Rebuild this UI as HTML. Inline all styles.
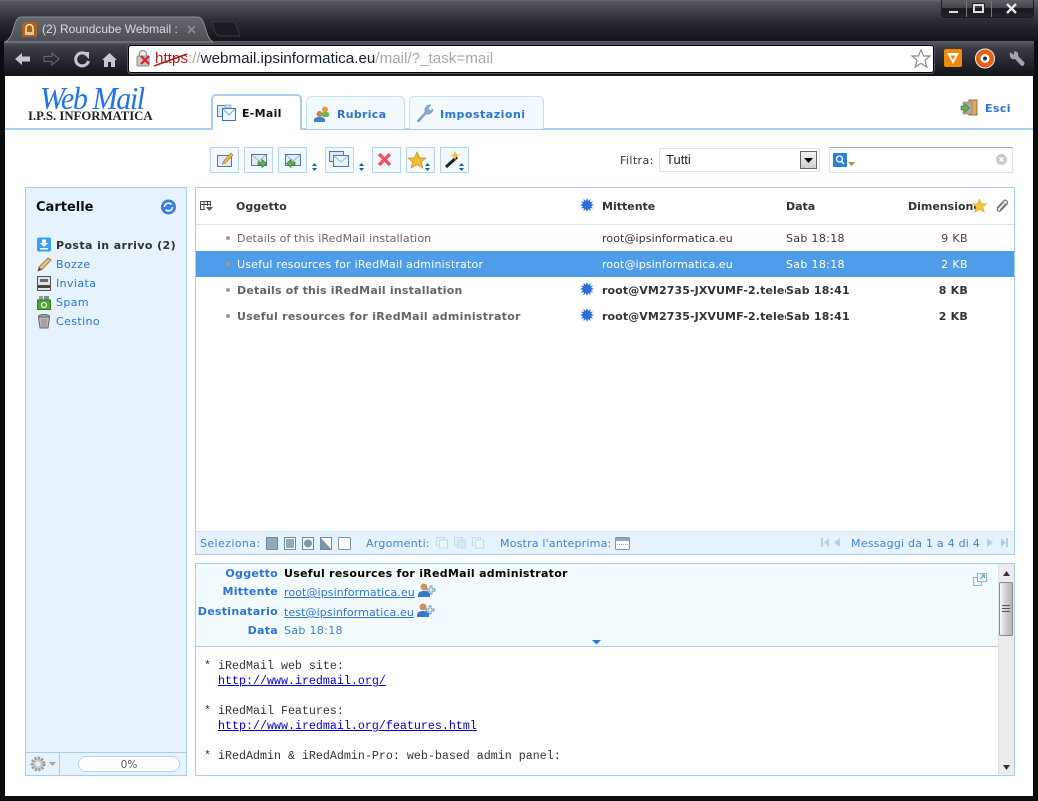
<!DOCTYPE html>
<html><head><meta charset="utf-8"><style>
html,body{margin:0;padding:0;width:1038px;height:801px;overflow:hidden;background:#0b0c10}
*{box-sizing:border-box}
.a,span.t{position:absolute}
svg{position:absolute;overflow:visible}
.t{position:absolute;white-space:nowrap;font:11px/14px "DejaVu Sans","Liberation Sans",sans-serif;color:#333}
.b{font-weight:bold}
.l{color:#2a75d8}
.s1{letter-spacing:.1px}.s2{letter-spacing:.2px}.s3{letter-spacing:.28px}.s4{letter-spacing:.4px}
.btn{position:absolute;top:147px;width:29px;height:26px;background:#f2f9ff;border:1px solid #b5d5f2}
.row{position:absolute;left:196px;width:818px;height:26px}
.dot{position:absolute;left:226px;width:4px;height:4px;border-radius:2px;background:#999}
</style></head><body>
<!-- chrome frame -->
<div class="a" style="left:0;top:0;width:1038px;height:41px;background:linear-gradient(#6a6b70 0,#53555e 2px,#2c2e37 20px,#15171e 38px)"></div>
<div class="a" style="left:4px;top:41px;width:1030px;height:36px;background:linear-gradient(#5a5c65 0,#3c3e47 6px,#15171e 32px)"></div>
<svg style="left:0;top:0" width="250" height="45"><defs><linearGradient id="tg" x1="0" y1="0" x2="0" y2="1"><stop offset="0" stop-color="#66686f"/><stop offset="1" stop-color="#4c4e57"/></linearGradient></defs>
<path d="M5 42C10 40 12 34 14 27C16 20 17 17 22 17H197C202 17 203 21 205 27C207 34 209 40 213 42Z" fill="url(#tg)" stroke="#8b8d94" stroke-width="1"/>
<path d="M212 22H233C236 22 238 30 240 36H219C215 36 214 28 212 22Z" fill="#1a1c23" stroke="#383a42"/></svg>
<svg style="left:22px;top:22px" width="15" height="15"><rect width="15" height="15" rx="2" fill="#a5651c"/><path d="M4 10V6a3.500 3.500 0 0 1 7 0V10" fill="none" stroke="#f4dfbe" stroke-width="1.600"/><rect x="3" y="10" width="9" height="3" fill="#e8c89a"/></svg>
<span class="t" style="left:42px;top:21px;font:12px/16px 'Liberation Sans',sans-serif;color:#d9dbe0;width:136px;overflow:hidden">(2) Roundcube Webmail ::</span>
<svg style="left:188px;top:26px" width="7" height="7"><path d="M0 0L7 7M7 0L0 7" stroke="#8b8d94" stroke-width="1.600"/></svg>
<!-- window buttons -->
<div class="a" style="left:941px;top:0;width:93px;height:18px;background:linear-gradient(#5e5f65 0,#44464d 45%,#17181d 50%,#24252b 100%);border:1px solid #1a1b20;border-top:0;border-radius:0 0 4px 4px"></div>
<div class="a" style="left:966px;top:1px;width:1px;height:16px;background:#777"></div>
<div class="a" style="left:991px;top:1px;width:1px;height:16px;background:#777"></div>
<div class="a" style="left:948px;top:10px;width:11px;height:4px;background:#ddd;border:1px solid #222"></div>
<div class="a" style="left:973px;top:4px;width:11px;height:9px;border:2px solid #ddd;outline:1px solid #222"></div>
<svg style="left:1006px;top:4px" width="11" height="9"><path d="M1 0L10 9M10 0L1 9" stroke="#e6e6e6" stroke-width="2.400"/></svg>
<!-- nav icons -->
<svg style="left:14px;top:51px" width="110" height="18"><path d="M1 8L8 2V5.500H16V10.500H8V14Z" fill="#c6c7ca"/>
<path d="M45 8L38 2V5.500H30V10.500H38V14Z" fill="none" stroke="#60626a" stroke-width="1.200"/>
<path d="M73 4A6.500 6.500 0 1 0 74.500 10" fill="none" stroke="#c6c7ca" stroke-width="3"/><path d="M68 1L75 1V8Z" fill="#c6c7ca"/>
<path d="M88 9L95.500 2L103 9H101V16H97V11H94V16H90V9Z" fill="#c6c7ca"/></svg>
<!-- omnibox -->
<div class="a" style="left:128px;top:45px;width:806px;height:28px;background:#fff;border:1px solid #000;box-shadow:0 0 0 1px #55575e;border-radius:3px"></div>
<svg style="left:136px;top:50px" width="20" height="18"><rect x="1" y="6" width="12" height="10" rx="1" fill="#c9c9c9" stroke="#8a8a8a"/><path d="M3.500 6V4a3.500 3.500 0 0 1 7 0V6" fill="none" stroke="#999" stroke-width="1.500"/><path d="M5 6L13 14M13 6L5 14" stroke="#d8232a" stroke-width="2.200"/></svg>
<span class="t" style="left:155px;top:50px;font:15.200px/18px 'Liberation Sans',sans-serif;color:#a8a8a8"><span style="color:#b01c1c">https</span>://<span style="color:#14213a">webmail.ipsinformatica.eu</span>/mail/?_task=mail</span>
<svg style="left:154px;top:52px" width="36" height="16"><path d="M0 14L33 2" stroke="#a81d1d" stroke-width="1.500"/></svg>
<svg style="left:911px;top:49px" width="20" height="19"><path d="M10 1L12.700 7H19L14 11.200L15.800 18L10 14.300L4.200 18L6 11.200L1 7H7.300Z" fill="#fff" stroke="#8c8c8c" stroke-width="1.200"/></svg>
<svg style="left:944px;top:49px" width="19" height="19"><rect width="18" height="18" rx="2" fill="#f08a0c"/><path d="M3 4H15L9 15Z M6.500 6.500L9 11L11.500 6.500Z" fill="#fff" fill-rule="evenodd"/></svg>
<svg style="left:975px;top:48px" width="21" height="21"><circle cx="10" cy="10.500" r="9.500" fill="#e85f12" stroke="#eee"/><circle cx="10" cy="10.500" r="4.500" fill="#fff"/><circle cx="10" cy="10.500" r="2" fill="#333"/></svg>
<svg style="left:1008px;top:50px" width="18" height="18"><path d="M2 2L6 5V1.500C9 1 11 3 10 6L16 12C17.500 14 15 17 13 15.500L7 9C4 10 1 8 2 2Z" fill="#a2a4a8"/></svg>
<!-- page -->
<div class="a" style="left:5px;top:76px;width:1028px;height:720px;background:#fff"></div>
<span class="t" style="left:40px;top:80px;font:italic 32px/36px 'Liberation Serif',serif;color:#2272ee;letter-spacing:-1.500px;transform:scaleX(.94);transform-origin:0 0">Web Mail</span>
<span class="t b" style="left:28px;top:108px;font:bold 13px/16px 'Liberation Serif',serif;color:#222;transform:scaleX(.98);transform-origin:0 0">I.P.S. INFORMATICA</span>
<!-- tabs -->
<div class="a" style="left:5px;top:128px;width:1028px;height:2px;background:#a9cdf0"></div>
<div class="a" style="left:306px;top:96px;width:99px;height:33px;background:#f2f9ff;border:1px solid #c6e0f8;border-bottom:0;border-radius:5px 5px 0 0"></div>
<div class="a" style="left:409px;top:96px;width:135px;height:33px;background:#f2f9ff;border:1px solid #c6e0f8;border-bottom:0;border-radius:5px 5px 0 0"></div>
<div class="a" style="left:211px;top:94px;width:91px;height:36px;background:#fff;border:2px solid #a9cdf0;border-bottom:0;border-radius:5px 5px 0 0"></div>
<svg style="left:217px;top:104px" width="20" height="18"><rect x="0.500" y="1.500" width="13" height="11" fill="#dbe9f7" stroke="#5d86b8"/><rect x="5.500" y="4.500" width="13" height="12" fill="#eef5fc" stroke="#3f6ea8"/><path d="M6 5L12 11L18 5" fill="none" stroke="#88a9cf"/><rect x="8" y="1" width="6" height="3" fill="#cde0f2" stroke="#7a9bc4" stroke-width=".6"/></svg>
<span class="t b s3" style="left:242px;top:106px;color:#111;top:107px">E-Mail</span>
<svg style="left:314px;top:105px" width="17" height="18"><circle cx="11" cy="4.500" r="3" fill="#e0a050"/><rect x="8" y="7" width="7" height="5" rx="2" fill="#6fb24f"/><circle cx="5.500" cy="9" r="3" fill="#c68456"/><path d="M0 17V15C0 12.500 3 12 5.500 12S11 12.500 11 15V17Z" fill="#3c82d8"/></svg>
<span class="t b l s3" style="left:337px;top:108px">Rubrica</span>
<svg style="left:416px;top:104px" width="17" height="18"><path d="M1 17L9 8C8 4 11 0 15 1L12 4L14 7L17 5C17 9 13 11 10 10L3 18Z" fill="#8aa5d3" stroke="#7088b4" stroke-width=".5"/></svg>
<span class="t b l" style="left:440px;top:108px;letter-spacing:.5px">Impostazioni</span>
<svg style="left:961px;top:99px" width="17" height="17"><rect x="8" y="1" width="8" height="15" fill="#dba768" stroke="#a86f30"/><rect x="2" y="3" width="9" height="12" fill="#aaa" stroke="#777" stroke-width=".5"/><path d="M0 7H4V4.500L8.500 9L4 13.500V11H0Z" fill="#64b24a" stroke="#3c7d2b" stroke-width=".6"/></svg>
<span class="t b l s4" style="left:985px;top:102px">Esci</span>
<!-- toolbar -->
<div class="btn" style="left:210px"></div><div class="btn" style="left:244px"></div><div class="btn" style="left:278px"></div><div class="btn" style="left:325px"></div><div class="btn" style="left:372px"></div><div class="btn" style="left:406px"></div><div class="btn" style="left:440px"></div>
<svg style="left:216px;top:150px" width="240" height="20" fill="none">
<rect x="1.500" y="5.500" width="14" height="11" fill="#dfeafa" stroke="#4f7ab0"/><path d="M7 12L15 3L17 5L9 13.500L6.500 14Z" fill="#f3b63e" stroke="#b3791e" stroke-width=".6"/>
<rect x="35.500" y="4.500" width="15" height="11" fill="#e0ecfa" stroke="#4f7ab0"/><path d="M36 5L43 11L50 5" stroke="#9bb7d8"/><path d="M42 12H46V9.500L50.500 13.500L46 17.500V15H42Z" fill="#6db44e" stroke="#37752a" stroke-width=".7"/>
<rect x="69.500" y="4.500" width="15" height="11" fill="#e0ecfa" stroke="#4f7ab0"/><path d="M70 5L77 11L84 5" stroke="#9bb7d8"/><path d="M79 12H75V9.500L70.500 13.500L75 17.500V15H79Z" fill="#6db44e" stroke="#37752a" stroke-width=".7"/>
<rect x="113.500" y="1.500" width="14" height="10" fill="#d8e6f7" stroke="#4f7ab0"/><rect x="117.500" y="5.500" width="15" height="11" fill="#eaf2fc" stroke="#4f7ab0"/><path d="M118 6L125 12L132 6" stroke="#9bb7d8"/>
<path d="M163 4L174 15M174 4L163 15" stroke="#f2525f" stroke-width="3.400"/>
<path d="M201 2L203.800 8H210L205.300 12L207 18L201 14.800L195 18L196.700 12L192 8H198.200Z" fill="#f0bd2a" stroke="#c9931a" stroke-width=".7"/>
<path d="M230 17L241 7" stroke="#222" stroke-width="3"/><path d="M239 1L240.500 4L244 5L240.500 6.500L239 10L237.500 6.500L234 5L237.500 4Z" fill="#f0c33c"/>
</svg>
<svg style="left:312px;top:162px" width="160" height="10" fill="#0a6a9c"><path d="M0 4L2.500 1L5 4Z M0 6L2.500 9L5 6Z"/><path d="M47 4L49.500 1L52 4Z M47 6L49.500 9L52 6Z"/><path d="M113 4L115.500 1L118 4Z M113 6L115.500 9L118 6Z"/><path d="M147 4L149.500 1L152 4Z M147 6L149.500 9L152 6Z"/></svg>
<span class="t s4" style="left:620px;top:154px">Filtra:</span>
<div class="a" style="left:659px;top:148px;width:161px;height:24px;background:#fff;border:1px solid #dfe3ee"></div>
<span class="t" style="left:666px;top:153px;color:#222;font-family:'Liberation Sans',sans-serif;font-size:13px">Tutti</span>
<div class="a" style="left:800px;top:151px;width:17px;height:18px;border:1px solid #666;background:linear-gradient(#f3f3f3,#cfcfcf)"></div>
<svg style="left:804px;top:158px" width="9" height="6"><path d="M0 0H9L4.500 5Z" fill="#000"/></svg>
<div class="a" style="left:829px;top:147px;width:184px;height:26px;background:#fff;border:1px solid #dfe3ee;border-top-color:#a8a8a8"></div>
<svg style="left:833px;top:153px" width="26" height="14"><rect width="14" height="14" rx="1" fill="#2c7fe0"/><circle cx="6.500" cy="6" r="3" fill="none" stroke="#fff" stroke-width="1.300"/><path d="M8.500 8.500L11 11" stroke="#fff" stroke-width="1.500"/><path d="M15 9H22L18.500 13Z" fill="#8c9a4a"/></svg>
<svg style="left:996px;top:154px" width="11" height="11"><circle cx="5.500" cy="5.500" r="5.500" fill="#c9c9c9"/><path d="M3.500 3.500L7.500 7.500M7.500 3.500L3.500 7.500" stroke="#fff" stroke-width="1.500"/></svg>
<!-- sidebar -->
<div class="a" style="left:25px;top:187px;width:162px;height:589px;background:#e6f2fd;border:1px solid #a9cdf0"></div>
<div class="a" style="left:26px;top:752px;width:160px;height:1px;background:#a9cdf0"></div>
<div class="a" style="left:59px;top:752px;width:1px;height:23px;background:#a9cdf0"></div>
<span class="t b" style="left:36px;top:200px;font-size:13px;line-height:16px;color:#111">Cartelle</span>
<svg style="left:161px;top:199px" width="15" height="16"><circle cx="7.500" cy="8" r="7.500" fill="#3a7fdc"/><path d="M3.500 8a4 4 0 0 1 7-2.500M11.500 8a4 4 0 0 1-7 2.500" fill="none" stroke="#fff" stroke-width="1.500"/></svg>
<svg style="left:37px;top:237px" width="15" height="15"><rect width="14" height="14" y=".5" rx="2" fill="#37a0ec"/><path d="M5 2.500H9V6H11.500L7 10L2.500 6H5Z M3 11H11V12.500H3Z" fill="#fff"/></svg>
<span class="t b s4" style="left:56px;top:239px;color:#333">Posta in arrivo (2)</span>
<svg style="left:37px;top:257px" width="15" height="15"><path d="M1 14L2 10L11 1L14 3L5 12.500Z" fill="#e8c47a" stroke="#8a6d3b" stroke-width=".8"/><path d="M1 14L2.500 10.500L4.500 12.500Z" fill="#444"/></svg>
<span class="t l s4" style="left:56px;top:258px">Bozze</span>
<svg style="left:37px;top:276px" width="15" height="15"><rect x=".5" y=".5" width="13" height="14" fill="#e3e3e3" stroke="#555"/><rect x="3" y="3" width="8" height="3" fill="#666"/><rect x="1" y="9" width="12" height="3" fill="#444"/></svg>
<span class="t l s4" style="left:56px;top:277px">Inviata</span>
<svg style="left:37px;top:295px" width="15" height="15"><rect x="2" y="1" width="4" height="4" fill="#999"/><rect x="7" y="1" width="5" height="4" fill="#888"/><rect x="0.500" y="5" width="13" height="9.500" fill="#4da53a" stroke="#2f7c25"/><circle cx="7" cy="10" r="2.500" fill="none" stroke="#dff3d6" stroke-width="1.300"/></svg>
<span class="t l s4" style="left:56px;top:296px">Spam</span>
<svg style="left:38px;top:314px" width="13" height="15"><ellipse cx="6" cy="2.500" rx="5.500" ry="2" fill="#aaa" stroke="#666"/><path d="M.5 3L2 14H10L11.500 3Z" fill="#bbb" stroke="#666"/><path d="M4 5V13M6 5V13M8 5V13" stroke="#777" stroke-width=".7"/></svg>
<span class="t l s4" style="left:56px;top:315px">Cestino</span>
<svg style="left:30px;top:756px" width="28" height="16"><circle cx="8" cy="8" r="6" fill="#c9c9c9" stroke="#9a9a9a" stroke-width="3" stroke-dasharray="2 1.500"/><circle cx="8" cy="8" r="2.500" fill="#eee"/><path d="M19 6H26L22.500 10Z" fill="#a5a5a5"/></svg>
<div class="a" style="left:78px;top:756px;width:102px;height:16px;background:#fff;border:1px solid #b5d5f2;border-radius:8px"></div>
<span class="t" style="left:78px;top:758px;width:102px;text-align:center;color:#555;font-size:10.500px">0%</span>
<!-- list -->
<div class="a" style="left:195px;top:187px;width:820px;height:368px;background:#fff;border:1px solid #a9cdf0"></div>
<div class="a" style="left:196px;top:224px;width:818px;height:1px;background:#cfe6fb"></div>
<div class="row" style="top:251px;background:#4f9ce8"></div>
<svg style="left:200px;top:201px" width="13" height="11"><path d="M.5 .5H10.500V5M.5 .5V8.500H5M.5 3.500H10.500M4 .5V8M7.500 .5V5" fill="none" stroke="#444"/><path d="M6 6H13L9.500 10Z" fill="#555"/></svg>
<span class="t b" style="left:236px;top:200px;color:#333">Oggetto</span>
<svg style="left:580px;top:198px" width="14" height="14"><use href="#s"/></svg>
<span class="t b" style="left:602px;top:200px;color:#333">Mittente</span>
<span class="t b" style="left:786px;top:200px;color:#333">Data</span>
<span class="t b" style="left:908px;top:200px;color:#333">Dimensione</span>
<svg style="left:972px;top:199px" width="15" height="14"><path d="M7.500 0L9.700 4.700H15L10.900 8L12.400 13.500L7.500 10.500L2.600 13.500L4.100 8L0 4.700H5.300Z" fill="#f2c33d" stroke="#cf9f2a" stroke-width=".5"/></svg>
<svg style="left:995px;top:199px" width="14" height="14"><path d="M2 9L8.500 2C10.500 0 14 2.500 12 5L6 11.500C4 13.500 1 11 3 9L9 2.800M5 11L11 4.500" fill="none" stroke="#777" stroke-width="1.200"/></svg>
<svg width="0" height="0" style="left:0;top:0"><defs><g id="s"><path d="M7 0L8.200 3L10.500 .9L10.200 4L13.300 3.500L11 5.700L14 7L11 8.300L13.300 10.500L10.200 10L10.500 13.100L8.200 11L7 14L5.800 11L3.500 13.100L3.800 10L.7 10.500L3 8.300L0 7L3 5.700L.7 3.500L3.800 4L3.500 .9L5.800 3Z" fill="#2c6fd8"/></g></defs></svg>
<div class="dot" style="top:236px"></div><div class="dot" style="top:262px"></div><div class="dot" style="top:288px"></div><div class="dot" style="top:314px"></div>
<span class="t" style="left:237px;top:232px;color:#666;letter-spacing:.12px">Details of this iRedMail installation</span>
<span class="t s1" style="left:602px;top:232px">root@ipsinformatica.eu</span>
<span class="t" style="left:786px;top:232px;letter-spacing:.33px">Sab 18:18</span>
<span class="t s4" style="left:900px;top:232px;width:68px;text-align:right;color:#444">9 KB</span>
<span class="t s2" style="left:237px;top:258px;color:#fff">Useful resources for iRedMail administrator</span>
<span class="t s1" style="left:602px;top:258px;color:#fff">root@ipsinformatica.eu</span>
<span class="t" style="left:786px;top:258px;color:#fff;letter-spacing:.33px">Sab 18:18</span>
<span class="t s4" style="left:900px;top:258px;width:68px;text-align:right;color:#fff">2 KB</span>
<span class="t b s2" style="left:237px;top:284px;color:#666">Details of this iRedMail installation</span>
<svg style="left:580px;top:282px" width="14" height="14"><use href="#s"/></svg>
<span class="t b s1" style="left:602px;top:284px;width:184px;overflow:hidden;color:#333">root@VM2735-JXVUMF-2.telecom</span>
<span class="t b s2" style="left:786px;top:284px">Sab 18:41</span>
<span class="t b s2" style="left:900px;top:284px;width:68px;text-align:right">8 KB</span>
<span class="t b s3" style="left:237px;top:310px;color:#666">Useful resources for iRedMail administrator</span>
<svg style="left:580px;top:308px" width="14" height="14"><use href="#s"/></svg>
<span class="t b s1" style="left:602px;top:310px;width:184px;overflow:hidden;color:#333">root@VM2735-JXVUMF-2.telecom</span>
<span class="t b s2" style="left:786px;top:310px">Sab 18:41</span>
<span class="t b s2" style="left:900px;top:310px;width:68px;text-align:right">2 KB</span>
<!-- list footer -->
<div class="a" style="left:196px;top:531px;width:818px;height:23px;background:#e6f2fd;border-top:1px solid #cfe6fb"></div>
<span class="t s4" style="left:200px;top:537px;color:#3f84d8">Seleziona:</span>
<svg style="left:266px;top:537px" width="86" height="14" fill="none"><rect x=".5" y=".5" width="11" height="12" fill="#8faabf" stroke="#6f8ba3"/><rect x="18.500" y=".5" width="11" height="12" fill="#fff" stroke="#6f8ba3"/><rect x="20" y="2" width="8" height="9" fill="#8faabf"/><rect x="36.500" y=".5" width="11" height="12" fill="#fff" stroke="#6f8ba3"/><circle cx="42" cy="6.500" r="4" fill="#7c97ad"/><rect x="54.500" y=".5" width="11" height="12" fill="#fff" stroke="#6f8ba3"/><path d="M55 1L65 12H55Z" fill="#7c97ad"/><rect x="72.500" y=".5" width="12" height="12" rx="1" fill="#fff" stroke="#7c97ad"/></svg>
<span class="t s3" style="left:366px;top:537px;color:#3f84d8">Argomenti:</span>
<svg style="left:436px;top:537px" width="50" height="14" fill="none" stroke="#c6dbe8"><rect x=".5" y=".5" width="8" height="8"/><rect x="3.500" y="3" width="8" height="8" fill="#eef6fd"/><rect x="18.500" y=".5" width="8" height="8"/><rect x="21.500" y="3" width="8" height="8" fill="#d9e8f3"/><rect x="36.500" y=".5" width="8" height="8"/><rect x="39.500" y="3" width="8" height="8" fill="#eef6fd"/></svg>
<span class="t s2" style="left:500px;top:537px;color:#3f84d8">Mostra l'anteprima:</span>
<svg style="left:615px;top:537px" width="15" height="13"><rect x=".5" y=".5" width="14" height="12" rx="1" fill="#fff" stroke="#7c97ad"/><rect x="1" y="1" width="13" height="3" fill="#8faabf"/><path d="M2 7.500H13" stroke="#aaa" stroke-dasharray="1 1"/></svg>
<svg style="left:821px;top:537px" width="190" height="12" fill="#b8cfe0"><path d="M0 1H2V10H0Z M8 1V10L3 5.500Z M19 1V10L13 5.500Z M166 1V10L172 5.500Z M180 1V10L185 5.500Z M185 1H187V10H185Z"/></svg>
<span class="t" style="left:851px;top:537px;color:#3f84d8;letter-spacing:.23px">Messaggi da 1 a 4 di 4</span>
<!-- preview -->
<div class="a" style="left:195px;top:563px;width:820px;height:213px;background:#fff;border:1px solid #a9cdf0"></div>
<div class="a" style="left:196px;top:564px;width:802px;height:83px;background:#f4fbff;border-bottom:1px solid #a9cdf0"></div>
<span class="t b l s3" style="left:196px;top:567px;width:82px;text-align:right">Oggetto</span>
<span class="t b s3" style="left:284px;top:567px;color:#000">Useful resources for iRedMail administrator</span>
<span class="t b l s3" style="left:196px;top:585px;width:82px;text-align:right">Mittente</span>
<span class="t s1" style="left:284px;top:586px;color:#2a75d8;text-decoration:underline">root@ipsinformatica.eu</span>
<span class="t b l s3" style="left:196px;top:605px;width:82px;text-align:right">Destinatario</span>
<span class="t s1" style="left:284px;top:606px;color:#2a75d8;text-decoration:underline">test@ipsinformatica.eu</span>
<span class="t b l s3" style="left:196px;top:624px;width:82px;text-align:right">Data</span>
<span class="t" style="left:284px;top:624px;color:#4080c8;letter-spacing:.33px">Sab 18:18</span>
<svg style="left:418px;top:583px" width="18" height="15"><circle cx="6" cy="4" r="3.500" fill="#d0925e"/><path d="M0 14V12C0 9 3 8 6 8S12 9 12 12V14Z" fill="#3578cc"/><path d="M12 3H14V6H17V8H14V11H12V8H9V6H12Z" fill="#fff" stroke="#3a7fa5" stroke-width=".7"/></svg>
<svg style="left:417px;top:603px" width="18" height="15"><circle cx="6" cy="4" r="3.500" fill="#d0925e"/><path d="M0 14V12C0 9 3 8 6 8S12 9 12 12V14Z" fill="#3578cc"/><path d="M12 3H14V6H17V8H14V11H12V8H9V6H12Z" fill="#fff" stroke="#3a7fa5" stroke-width=".7"/></svg>
<svg style="left:592px;top:640px" width="9" height="5"><path d="M0 0H9L4.500 4.500Z" fill="#2a75d8"/></svg>
<svg style="left:973px;top:573px" width="14" height="13" fill="none" stroke="#8fb8cc"><rect x=".5" y="4.500" width="8" height="8" /><rect x="4.500" y=".5" width="9" height="8" fill="#f4fbff"/><path d="M7 6L11.500 2M8.500 2H11.500V5" stroke="#6fa3bd" stroke-width="1.300"/></svg>
<div class="a" style="left:998px;top:564px;width:16px;height:211px;background:#ececec;border-left:1px solid #e2e2e2"></div>
<svg style="left:1003px;top:571px" width="8" height="5"><path d="M0 5H7L3.500 0Z" fill="#333"/></svg>
<svg style="left:1003px;top:765px" width="8" height="5"><path d="M0 0H7L3.500 5Z" fill="#333"/></svg>
<div class="a" style="left:999px;top:582px;width:14px;height:54px;border:1px solid #8a8a8a;border-radius:2px;background:linear-gradient(90deg,#fafafa,#d5d5d5 40%,#b5b5b5)"></div>
<div class="a" style="left:1002px;top:605px;width:8px;height:7px;border-top:1px solid #555;border-bottom:1px solid #555"></div>
<div class="a" style="left:1002px;top:608px;width:8px;height:1px;background:#555"></div>
<div class="a" style="left:204px;top:659px;font:11.670px/15px 'Liberation Mono',monospace;color:#333;white-space:pre">* iRedMail web site:
  <span style="color:#0000d0;text-decoration:underline">http://www.iredmail.org/</span>

* iRedMail Features:
  <span style="color:#0000d0;text-decoration:underline">http://www.iredmail.org/features.html</span>

* iRedAdmin &amp; iRedAdmin-Pro: web-based admin panel:</div>
</body></html>
